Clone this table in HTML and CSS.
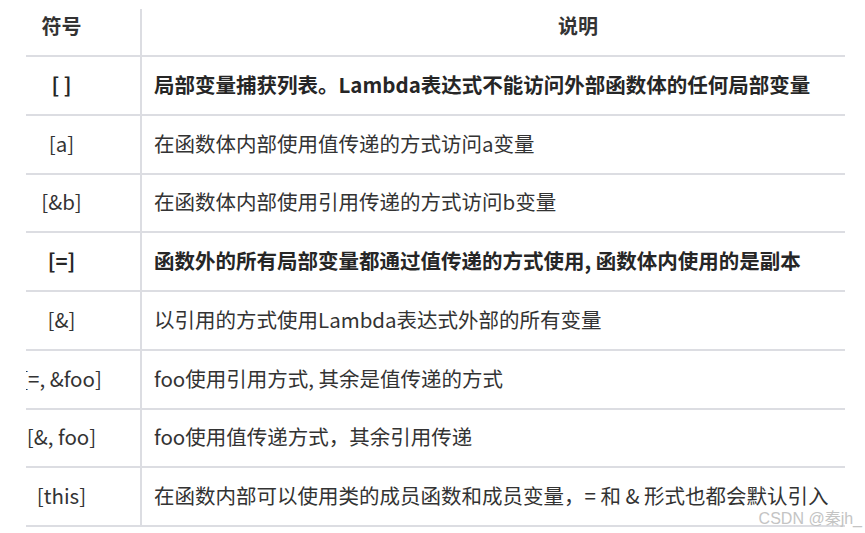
FILE: index.html
```html
<!DOCTYPE html>
<html lang="zh-CN">
<head>
<meta charset="utf-8">
<title>Lambda 捕获列表</title>
<link rel="stylesheet" href="styles.css">
</head>
<body>
<div class="page">
  <div class="frame">
    <table class="capture">
      <thead>
        <tr><th class="sym">符号</th><th class="desc">说明</th></tr>
      </thead>
      <tbody>
        <tr class="strong"><td class="sym">[ ]</td><td class="desc">局部变量捕获列表。Lambda表达式不能访问外部函数体的任何局部变量</td></tr>
        <tr><td class="sym">[a]</td><td class="desc">在函数体内部使用值传递的方式访问a变量</td></tr>
        <tr><td class="sym">[&amp;b]</td><td class="desc">在函数体内部使用引用传递的方式访问b变量</td></tr>
        <tr class="strong"><td class="sym">[=]</td><td class="desc">函数外的所有局部变量都通过值传递的方式使用, 函数体内使用的是副本</td></tr>
        <tr><td class="sym">[&amp;]</td><td class="desc">以引用的方式使用Lambda表达式外部的所有变量</td></tr>
        <tr><td class="sym">[=, &amp;foo]</td><td class="desc">foo使用引用方式, 其余是值传递的方式</td></tr>
        <tr><td class="sym">[&amp;, foo]</td><td class="desc">foo使用值传递方式，其余引用传递</td></tr>
        <tr><td class="sym">[this]</td><td class="desc">在函数内部可以使用类的成员函数和成员变量，= 和 &amp; 形式也都会默认引入</td></tr>
      </tbody>
    </table>
  </div>
  <div class="mark">CSDN @秦jh_</div>
</div>
</body>
</html>
```

FILE: styles.css
```css
html, body {
  margin: 0;
  padding: 0;
  background: #ffffff;
}

body {
  font-family: "Noto Sans CJK SC", "Noto Sans", sans-serif;
  color: #333333;
}

.page {
  position: relative;
  width: 865px;
  height: 533px;
  overflow: hidden;
}

.frame {
  margin-left: 26px;
  width: 819px;
  padding-top: 9px;
  overflow: hidden;
}

.capture {
  margin-left: -43px;
  border-collapse: separate;
  border-spacing: 0;
  table-layout: fixed;
  width: 1031px;
  font-size: 20.5px;
  line-height: 30px;
}

.capture th,
.capture td {
  padding: 0;
  border-bottom: 2px solid #dcdde2;
  vertical-align: middle;
}

.capture th {
  height: 34px;
  padding-bottom: 12px;
  font-size: 20px;
  font-weight: 700;
  color: #333333;
}

.capture td {
  height: 53.75px;
  padding-bottom: 3px;
}

.capture .sym {
  width: 157px;
  text-align: center;
}

.capture .desc {
  border-left: 2px solid #dcdde2;
}

.capture td.desc {
  padding-left: 12px;
  text-align: left;
  white-space: nowrap;
}

.capture th.desc {
  text-align: center;
}

.capture tr.strong td {
  font-weight: 700;
  color: #262626;
}

.mark {
  position: absolute;
  right: 3px;
  bottom: 5px;
  font-family: "Liberation Sans", "Noto Sans CJK SC", sans-serif;
  font-size: 16px;
  line-height: 18px;
  color: #c4c4c4;
}
```
